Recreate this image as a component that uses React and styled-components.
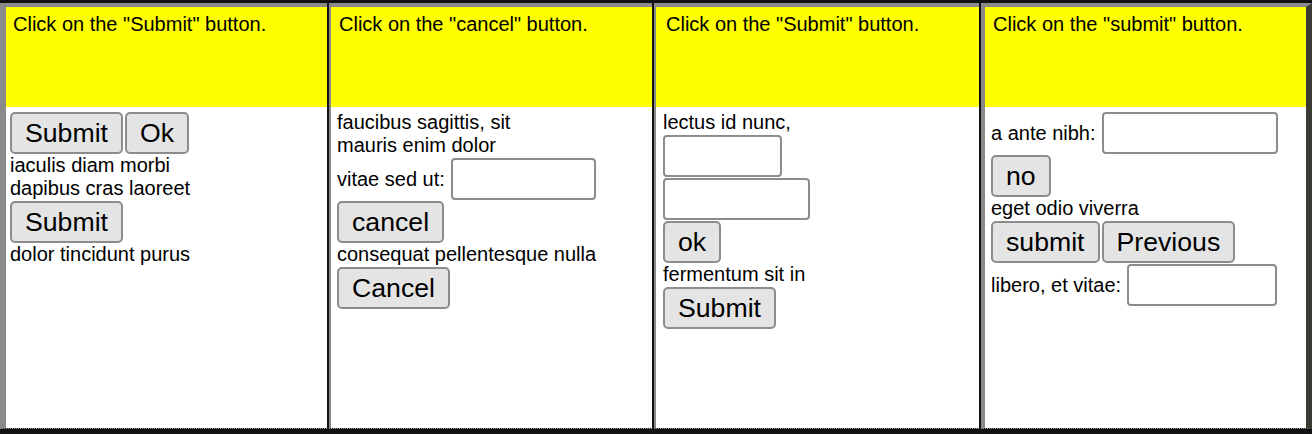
import React from "react";
import styled, { createGlobalStyle } from "styled-components";

const Global = createGlobalStyle`
  html, body { margin: 0; padding: 0; background: #121212; }
  * { box-sizing: border-box; }
`;

const Strip = styled.div`
  display: flex;
  gap: 2px;
  width: 1312px;
  height: 434px;
  padding-top: 3px;
  background: #121212;
  font-family: "Liberation Sans", Arial, sans-serif;
  color: #000;
  overflow: hidden;
`;

const Panel = styled.div`
  display: flex;
  flex-direction: column;
  flex: none;
  width: ${(p) => p.$w + p.$edge + (p.$right || 0)}px;
  height: 426px;
  border-top: 4px solid #8a8a8a;
  border-left: ${(p) => p.$edge}px solid #8a8a8a;
  border-right: ${(p) => (p.$right ? `${p.$right}px solid #3b3b34` : "none")};
  border-bottom: 1px dotted #9a9a9a;
`;

const Query = styled.div`
  height: 100px;
  flex: none;
  background: #ffff00;
  padding: 6px ${(p) => p.$pad}px;
  font-size: 20px;
  line-height: 23px;
`;

const Area = styled.div`
  flex: 1;
  background: #fff;
  padding: 4px ${(p) => p.$pad}px;
  display: flex;
  flex-direction: column;
  align-items: flex-start;
`;

const Line = styled.div`
  font-size: 20px;
  line-height: 23px;
  white-space: nowrap;
`;

const ButtonRow = styled.div`
  display: flex;
  gap: 2px;
  margin-top: 1px;
`;

const Button = styled.button`
  height: 42px;
  margin: 0;
  padding: 0 13px;
  font-family: "Liberation Sans", Arial, sans-serif;
  font-size: 26.67px;
  line-height: 30px;
  color: #000;
  background: #e4e4e4;
  border: 2px solid #8c8c8c;
  border-radius: 5px;
`;

const FieldRow = styled.div`
  display: flex;
  align-items: center;
  gap: 6px;
  margin-top: 1px;
`;

const Input = styled.input`
  height: 42px;
  margin: 0;
  padding: 2px 4px;
  background: #fff;
  border: 2px solid #8c8c8c;
  border-radius: 4px;
  font-size: 20px;
`;

const panels = [
  {
    w: 321, edge: 6, pad: 4, qpad: 7,
    query: 'Click on the "Submit" button.',
    items: [
      { t: "buttons", labels: ["Submit", "Ok"] },
      { t: "text", text: "iaculis diam morbi" },
      { t: "text", text: "dapibus cras laoreet" },
      { t: "buttons", labels: ["Submit"] },
      { t: "text", text: "dolor tincidunt purus" },
    ],
  },
  {
    w: 321, edge: 2, pad: 6, qpad: 8,
    query: 'Click on the "cancel" button.',
    items: [
      { t: "text", text: "faucibus sagittis, sit" },
      { t: "text", text: "mauris enim dolor" },
      { t: "field", label: "vitae sed ut:", width: 145 },
      { t: "buttons", labels: ["cancel"] },
      { t: "text", text: "consequat pellentesque nulla" },
      { t: "buttons", labels: ["Cancel"] },
    ],
  },
  {
    w: 323, edge: 2, pad: 7, qpad: 10,
    query: 'Click on the "Submit" button.',
    items: [
      { t: "text", text: "lectus id nunc," },
      { t: "field", width: 119 },
      { t: "field", width: 147 },
      { t: "buttons", labels: ["ok"] },
      { t: "text", text: "fermentum sit in" },
      { t: "buttons", labels: ["Submit"] },
    ],
  },
  {
    w: 321, edge: 4, right: 6, pad: 6, qpad: 8,
    query: 'Click on the "submit" button.',
    items: [
      { t: "field", label: "a ante nibh:", width: 176 },
      { t: "buttons", labels: ["no"] },
      { t: "text", text: "eget odio viverra" },
      { t: "buttons", labels: ["submit", "Previous"] },
      { t: "field", label: "libero, et vitae:", width: 150 },
    ],
  },
];

function Item({ item }) {
  if (item.t === "text") return <Line>{item.text}</Line>;
  if (item.t === "buttons")
    return (
      <ButtonRow>
        {item.labels.map((l, i) => (
          <Button key={i}>{l}</Button>
        ))}
      </ButtonRow>
    );
  return (
    <FieldRow>
      {item.label && <Line>{item.label}</Line>}
      <Input type="text" style={{ width: item.width }} />
    </FieldRow>
  );
}

export default function App() {
  return (
    <>
      <Global />
      <Strip>
        {panels.map((p, i) => (
          <Panel key={i} $w={p.w} $edge={p.edge} $right={p.right}>
            <Query $pad={p.qpad}>{p.query}</Query>
            <Area $pad={p.pad}>
              {p.items.map((it, j) => (
                <Item key={j} item={it} />
              ))}
            </Area>
          </Panel>
        ))}
      </Strip>
    </>
  );
}
